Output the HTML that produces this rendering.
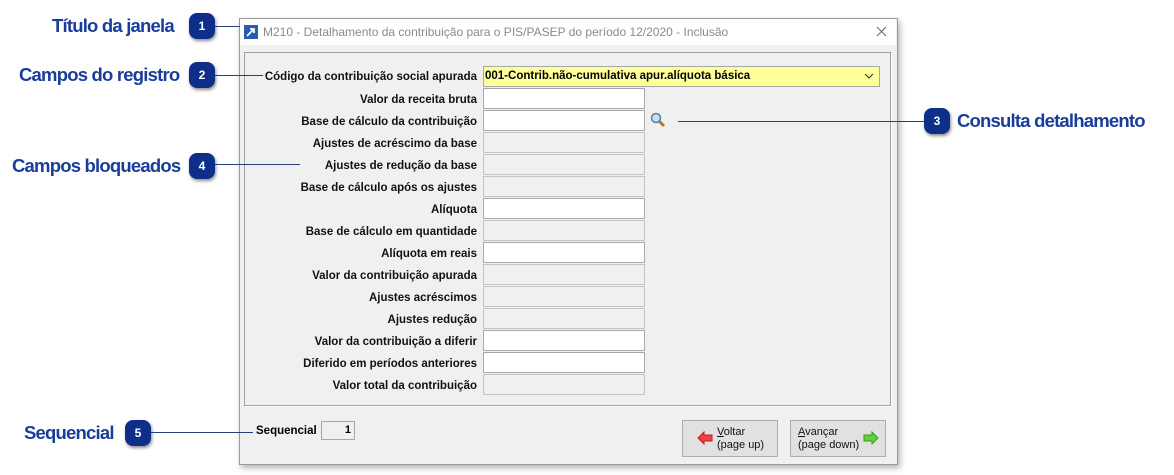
<!DOCTYPE html>
<html><head><style>
body{margin:0;width:1174px;height:475px;background:#fff;position:relative;overflow:hidden;font-family:"Liberation Sans",sans-serif}
.a{position:absolute}
.cl{position:absolute;color:#1a3d9c;font-weight:bold;font-size:18.5px;letter-spacing:-0.8px;white-space:nowrap}
.bd{position:absolute;width:26px;height:26px;border-radius:8px;background:#0d2f8a;color:#fff;font-size:12px;font-weight:bold;text-align:center;line-height:26px;box-shadow:1px 2px 3px rgba(0,0,0,.45)}
.ln{position:absolute;height:1px;background:#2a3f7a}
.lb{position:absolute;right:697px;font-size:11.5px;font-weight:bold;color:#111;white-space:nowrap;text-align:right;margin-top:2px}
.in{position:absolute;left:483px;width:160px;height:19px;border:1px solid #a8a8a8;background:#fff}
.in.d{background:#f0f0f0;border-color:#c4c4c4}
.btn{position:absolute;top:420px;width:94px;height:35px;border:1px solid #adadad;background:#e1e1e1;font-size:11px;color:#111;line-height:13px}
</style></head><body>
<div class="a" style="left:239px;top:18px;width:657px;height:445px;background:#f0f0f0;border:1px solid #9a9a9a;box-shadow:2px 3px 6px rgba(0,0,0,.3)"></div>
<div class="a" style="left:240px;top:19px;width:656px;height:26px;background:#fff"></div>
<svg class="a" style="left:243px;top:24px" width="16" height="16"><rect x="1" y="1" width="14" height="14" fill="#2a5db0"/><path d="M4 12 L11 5 M7 5 H11 V9" stroke="#fff" stroke-width="1.8" fill="none"/></svg>
<div class="a" style="left:263px;top:25px;font-size:12px;color:#8a8a8a">M210 - Detalhamento da contribuição para o PIS/PASEP do período 12/2020 - Inclusão</div>
<svg class="a" style="left:876px;top:26px" width="11" height="11"><path d="M1 1 L10 10 M10 1 L1 10" stroke="#666" stroke-width="1"/></svg>
<div class="a" style="left:244px;top:52px;width:646px;height:353px;border:1px solid #a0a0a0;border-right-color:#fff;border-bottom-color:#fff;box-shadow:inset -1px -1px 0 #a0a0a0"></div>

<div class="lb" style="top:69px">Código da contribuição social apurada</div>
<div class="a" style="left:483px;top:66px;width:394px;height:19px;border:1px solid #a8a8a8;background:#ffff99;font-size:11.5px;font-weight:bold;line-height:19px;padding-left:1px">001-Contrib.não-cumulativa apur.alíquota básica</div>
<svg class="a" style="left:864px;top:73px" width="10" height="7"><path d="M1 1 L5 5 L9 1" stroke="#333" fill="none"/></svg>

<div class="lb" style="top:92px">Valor da receita bruta</div><div class="in" style="top:88px"></div>
<div class="lb" style="top:114px">Base de cálculo da contribuição</div><div class="in" style="top:110px"></div>
<div class="lb" style="top:136px">Ajustes de acréscimo da base</div><div class="in d" style="top:132px"></div>
<div class="lb" style="top:158px">Ajustes de redução da base</div><div class="in d" style="top:154px"></div>
<div class="lb" style="top:180px">Base de cálculo após os ajustes</div><div class="in d" style="top:176px"></div>
<div class="lb" style="top:202px">Alíquota</div><div class="in" style="top:198px"></div>
<div class="lb" style="top:224px">Base de cálculo em quantidade</div><div class="in d" style="top:220px"></div>
<div class="lb" style="top:246px">Alíquota em reais</div><div class="in" style="top:242px"></div>
<div class="lb" style="top:268px">Valor da contribuição apurada</div><div class="in d" style="top:264px"></div>
<div class="lb" style="top:290px">Ajustes acréscimos</div><div class="in d" style="top:286px"></div>
<div class="lb" style="top:312px">Ajustes redução</div><div class="in d" style="top:308px"></div>
<div class="lb" style="top:334px">Valor da contribuição a diferir</div><div class="in" style="top:330px"></div>
<div class="lb" style="top:356px">Diferido em períodos anteriores</div><div class="in" style="top:352px"></div>
<div class="lb" style="top:378px">Valor total da contribuição</div><div class="in d" style="top:374px"></div>

<svg class="a" style="left:650px;top:112px" width="16" height="16"><circle cx="6" cy="6" r="4.5" fill="#bfe0f5" stroke="#5a7fa0" stroke-width="1.5"/><path d="M9.5 9.5 L14 14" stroke="#b07a30" stroke-width="3"/></svg>

<div class="a" style="left:256px;top:425px;font-size:11.5px;font-weight:bold">Sequencial</div>
<div class="a" style="left:321px;top:421px;border:1px solid #a8a8a8;background:#f0f0f0;font-size:11px;font-weight:bold;text-align:right;line-height:17px;box-sizing:border-box;padding-right:3px;width:34px;height:19px">1</div>

<div class="btn" style="left:682px"><svg class="a" style="left:14px;top:10px" width="16" height="14"><path d="M1 7 L7 1 V4 H15 V10 H7 V13 Z" fill="#f04040" stroke="#c02020"/></svg><div class="a" style="left:34px;top:5px"><u>V</u>oltar<br>(page up)</div></div>
<div class="btn" style="left:790px"><div class="a" style="left:7px;top:5px"><u>A</u>vançar<br>(page down)</div><svg class="a" style="left:72px;top:10px" width="16" height="14"><path d="M15 7 L9 1 V4 H1 V10 H9 V13 Z" fill="#60d040" stroke="#30a020"/></svg></div>

<div class="cl" style="left:52px;top:15px">Título da janela</div><div class="bd" style="left:189px;top:13px">1</div><div class="ln" style="left:215px;top:26px;width:25px"></div>
<div class="cl" style="left:19px;top:64px">Campos do registro</div><div class="bd" style="left:189px;top:62px">2</div><div class="ln" style="left:215px;top:75px;width:48px"></div>
<div class="cl" style="left:12px;top:155px">Campos bloqueados</div><div class="bd" style="left:189px;top:153px">4</div><div class="ln" style="left:215px;top:164px;width:85px"></div>
<div class="cl" style="left:24px;top:422px">Sequencial</div><div class="bd" style="left:125px;top:420px">5</div><div class="ln" style="left:151px;top:432px;width:102px"></div>
<div class="ln" style="left:678px;top:121px;width:246px"></div><div class="bd" style="left:924px;top:108px">3</div><div class="cl" style="left:957px;top:110px">Consulta detalhamento</div>
</body></html>
